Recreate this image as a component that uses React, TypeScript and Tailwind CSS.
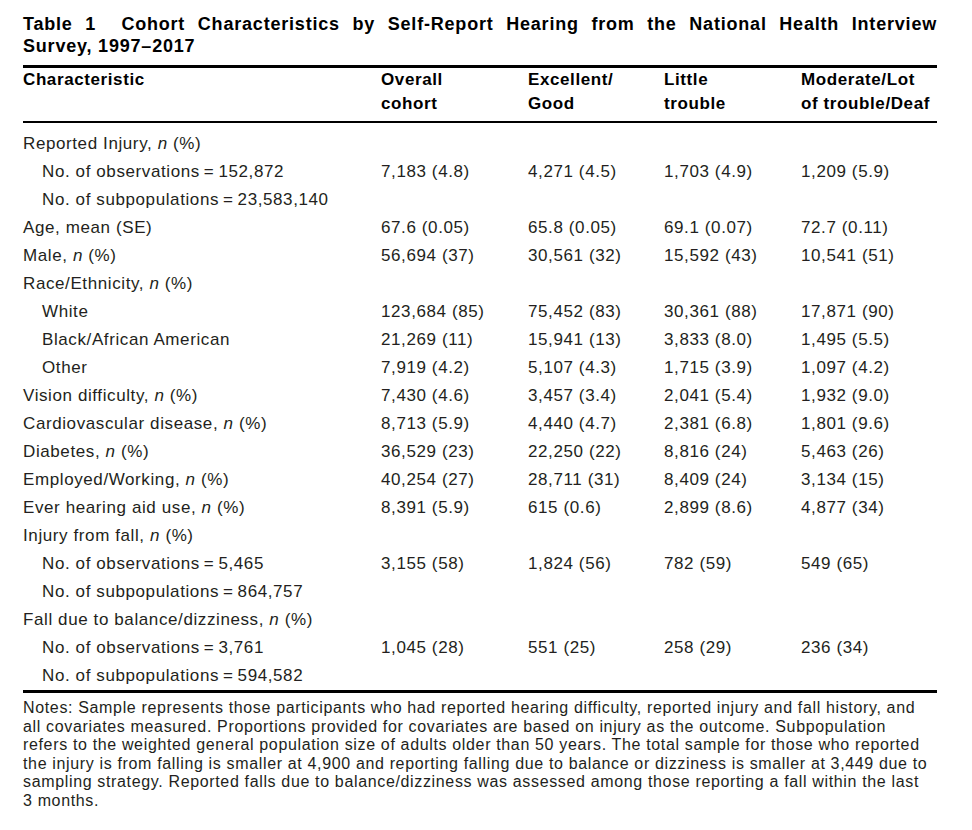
const ROWS: { label: React.ReactNode; indent?: boolean; values?: string[] }[] = [
  { label: <>Reported Injury, <i>n</i> (%)</> },
  { label: "No. of observations\u2009=\u2009152,872", indent: true, values: ["7,183 (4.8)", "4,271 (4.5)", "1,703 (4.9)", "1,209 (5.9)"] },
  { label: "No. of subpopulations\u2009=\u200923,583,140", indent: true },
  { label: "Age, mean (SE)", values: ["67.6 (0.05)", "65.8 (0.05)", "69.1 (0.07)", "72.7 (0.11)"] },
  { label: <>Male, <i>n</i> (%)</>, values: ["56,694 (37)", "30,561 (32)", "15,592 (43)", "10,541 (51)"] },
  { label: <>Race/Ethnicity, <i>n</i> (%)</> },
  { label: "White", indent: true, values: ["123,684 (85)", "75,452 (83)", "30,361 (88)", "17,871 (90)"] },
  { label: "Black/African American", indent: true, values: ["21,269 (11)", "15,941 (13)", "3,833 (8.0)", "1,495 (5.5)"] },
  { label: "Other", indent: true, values: ["7,919 (4.2)", "5,107 (4.3)", "1,715 (3.9)", "1,097 (4.2)"] },
  { label: <>Vision difficulty, <i>n</i> (%)</>, values: ["7,430 (4.6)", "3,457 (3.4)", "2,041 (5.4)", "1,932 (9.0)"] },
  { label: <>Cardiovascular disease, <i>n</i> (%)</>, values: ["8,713 (5.9)", "4,440 (4.7)", "2,381 (6.8)", "1,801 (9.6)"] },
  { label: <>Diabetes, <i>n</i> (%)</>, values: ["36,529 (23)", "22,250 (22)", "8,816 (24)", "5,463 (26)"] },
  { label: <>Employed/Working, <i>n</i> (%)</>, values: ["40,254 (27)", "28,711 (31)", "8,409 (24)", "3,134 (15)"] },
  { label: <>Ever hearing aid use, <i>n</i> (%)</>, values: ["8,391 (5.9)", "615 (0.6)", "2,899 (8.6)", "4,877 (34)"] },
  { label: <>Injury from fall, <i>n</i> (%)</> },
  { label: "No. of observations\u2009=\u20095,465", indent: true, values: ["3,155 (58)", "1,824 (56)", "782 (59)", "549 (65)"] },
  { label: "No. of subpopulations\u2009=\u2009864,757", indent: true },
  { label: <>Fall due to balance/dizziness, <i>n</i> (%)</> },
  { label: "No. of observations\u2009=\u20093,761", indent: true, values: ["1,045 (28)", "551 (25)", "258 (29)", "236 (34)"] },
  { label: "No. of subpopulations\u2009=\u2009594,582", indent: true },
];

const NOTES = [
  "Notes: Sample represents those participants who had reported hearing difficulty, reported injury and fall history, and",
  "all covariates measured. Proportions provided for covariates are based on injury as the outcome. Subpopulation",
  "refers to the weighted general population size of adults older than 50 years. The total sample for those who reported",
  "the injury is from falling is smaller at 4,900 and reporting falling due to balance or dizziness is smaller at 3,449 due to",
  "sampling strategy. Reported falls due to balance/dizziness was assessed among those reporting a fall within the last",
  "3 months.",
];

const COLS = "grid grid-cols-[358px_147px_136px_137px_1fr]";

export default function App() {
  return (
    <div className="min-h-[830px] bg-white text-[#231f20] font-['Liberation_Sans',Arial,sans-serif]">
      <div className="w-[914px] ml-[23px] pt-[13px]">
        <h1 className="text-[18px] leading-[22px] font-bold text-black tracking-[0.8px]">
          <div className="text-justify [text-align-last:justify]">
            Table 1&nbsp;&nbsp;Cohort Characteristics by Self-Report Hearing from the National Health Interview
          </div>
          <div>Survey, 1997–2017</div>
        </h1>

        <div className="mt-[8px] border-t-[3px] border-black">
          <div className={`${COLS} text-[17px] leading-[24px] font-bold text-black tracking-[0.6px] pb-[5px] border-b-2 border-black`}>
            <div>Characteristic</div>
            <div>Overall<br />cohort</div>
            <div>Excellent/<br />Good</div>
            <div>Little<br />trouble</div>
            <div>Moderate/Lot<br />of trouble/Deaf</div>
          </div>

          <div className="pt-[7px] border-b-[3px] border-black text-[17px] tracking-[0.6px]">
            {ROWS.map((r, i) => (
              <div key={i} className={`${COLS} h-[28px] items-center`}>
                <div className={`whitespace-nowrap ${r.indent ? "pl-[19px]" : ""}`}>{r.label}</div>
                {(r.values ?? ["", "", "", ""]).map((v, j) => (
                  <div key={j} className="whitespace-nowrap">{v}</div>
                ))}
              </div>
            ))}
          </div>
        </div>

        <div className="mt-[6px] text-[16px] leading-[18.5px] tracking-[0.65px]">
          {NOTES.map((line) => (
            <div key={line} className="whitespace-nowrap">{line}</div>
          ))}
        </div>
      </div>
    </div>
  );
}
